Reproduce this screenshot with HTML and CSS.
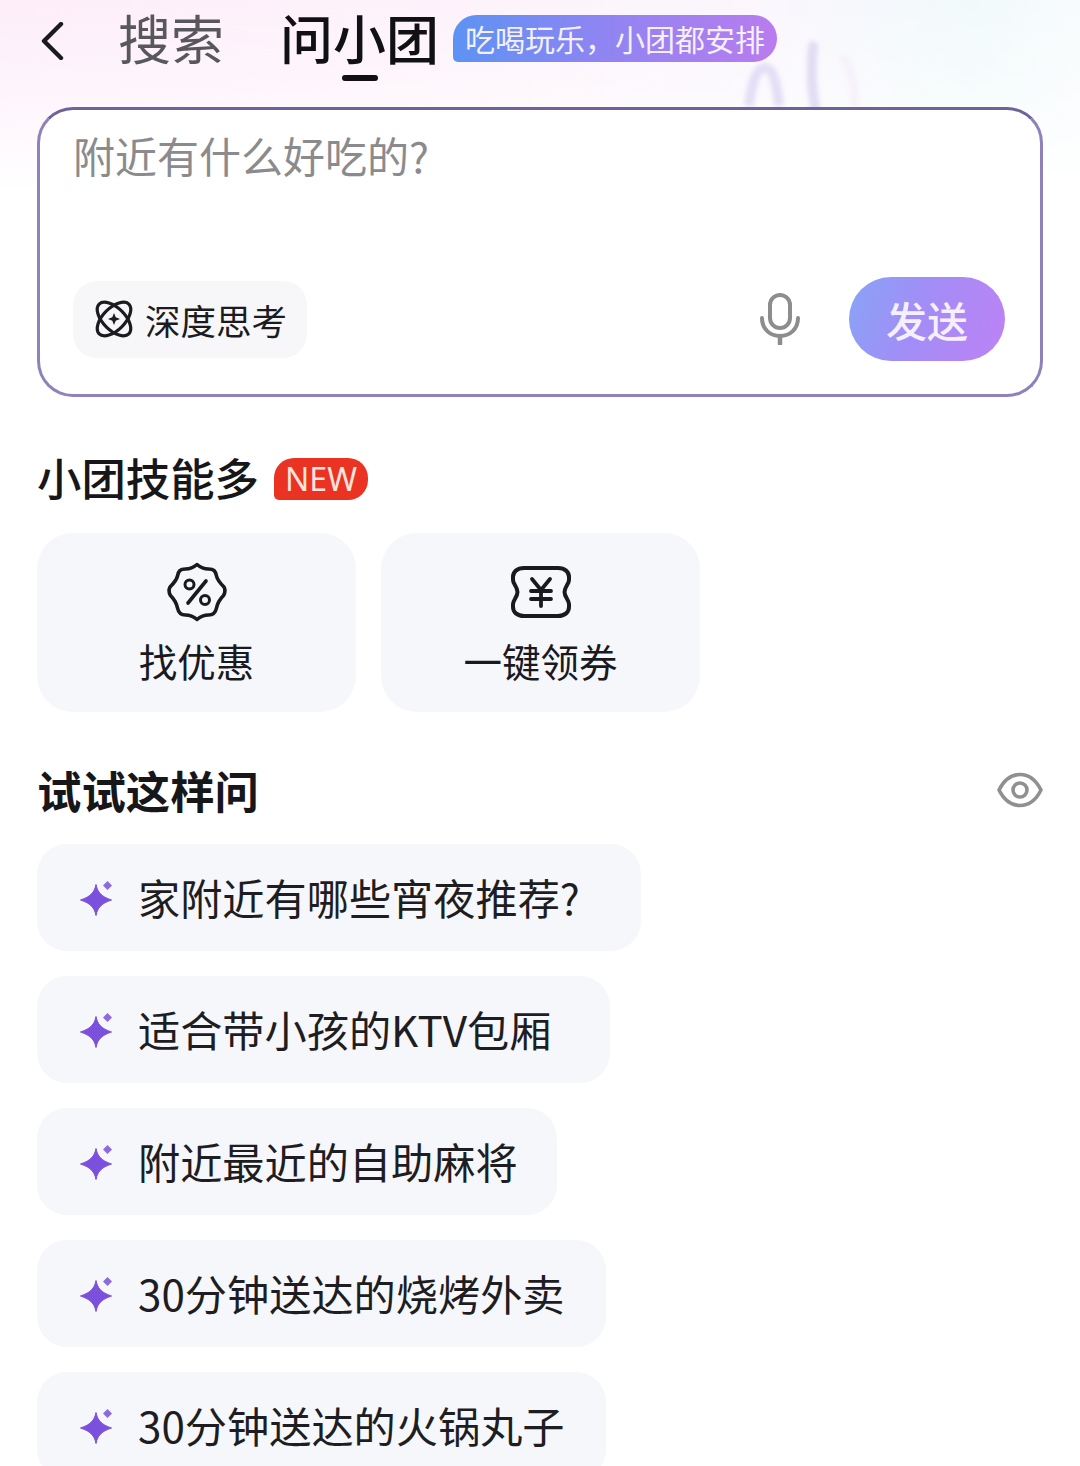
FILE: index.html
```html
<!DOCTYPE html>
<html lang="zh-CN">
<head>
<meta charset="utf-8">
<title>问小团</title>
<link rel="stylesheet" href="styles.css">
</head>
<body>
<div class="page">
  <div class="bg-glow"></div>
  <svg class="bg-mark" viewBox="0 0 140 70" width="140" height="70" aria-hidden="true">
    <path d="M14 66C17 40 22 28 30 28C38 28 42 44 44 66" fill="none" stroke="#e4dff5" stroke-width="10"/>
    <path d="M78 6C76 24 76 46 80 66" fill="none" stroke="#e2ddf3" stroke-width="10" stroke-linecap="round"/>
    <path d="M108 16C116 30 120 46 120 66" fill="none" stroke="#f6f1fa" stroke-width="8"/>
  </svg>
  <header class="top">
    <svg class="back" viewBox="0 0 24 38" width="24" height="38" aria-hidden="true">
      <path d="M21 2L4 19L21 36" fill="none" stroke="#1b1b1f" stroke-width="4.400" stroke-linecap="round" stroke-linejoin="round"/>
    </svg>
    <span class="tab">搜索</span>
    <span class="tab tab-active">问小团</span>
    <span class="slogan">吃喝玩乐，小团都安排</span>
  </header>

  <section class="ask">
    <div class="placeholder">附近有什么好吃的?</div>
    <div class="ask-foot">
      <div class="chip">
        <svg viewBox="0 0 38 38" width="38" height="38" aria-hidden="true">
          <g fill="none" stroke="#1c1c20" stroke-width="3.200">
            <ellipse cx="19" cy="19" rx="21" ry="11" transform="rotate(45 19 19)"/>
            <ellipse cx="19" cy="19" rx="21" ry="11" transform="rotate(-45 19 19)"/>
          </g>
          <path d="M19 13L20.700 17.300L25 19L20.700 20.700L19 25L17.300 20.700L13 19L17.300 17.300Z" fill="#1c1c20"/>
        </svg>
        <span>深度思考</span>
      </div>
      <div class="ask-actions">
        <svg class="mic" viewBox="0 0 40 52" width="40" height="52" aria-hidden="true">
          <rect x="10" y="2" width="20" height="33" rx="10" fill="none" stroke="#8d8d8f" stroke-width="4"/>
          <path d="M2 25C2 36 10 43 20 43C30 43 38 36 38 25" fill="none" stroke="#8d8d8f" stroke-width="4" stroke-linecap="round"/>
          <path d="M20 43V51" stroke="#8d8d8f" stroke-width="4.500" stroke-linecap="round"/>
        </svg>
        <div class="send">发送</div>
      </div>
    </div>
  </section>

  <div class="heading heading-skill">
    <h2>小团技能多</h2>
    <span class="new">NEW</span>
  </div>
  <div class="skills">
    <div class="skill">
      <svg viewBox="0 0 60 60" width="60" height="60" aria-hidden="true">
        <path d="M30 2.500C33.500 5.500 36 7 41.500 7C47 7 48.500 9 49.500 14C50.500 18.500 53 21 57 25C58.500 28 58 31 56.500 33.500C53 37 50.500 41 49.500 46C48.500 51 46 53 41.500 53C36 53 33.500 54.500 30 57.500C26.500 54.500 24 53 18.500 53C14 53 11.500 51 10.500 46C9.500 41 7 37 3.500 33.500C2 31 1.500 28 3 25C7 21 9.500 18.500 10.500 14C11.500 9 13 7 18.500 7C24 7 26.500 5.500 30 2.500Z" fill="none" stroke="#1a1a1e" stroke-width="3.600" stroke-linejoin="round"/>
        <circle cx="22.500" cy="22.500" r="4.500" fill="none" stroke="#1a1a1e" stroke-width="3"/>
        <circle cx="38" cy="38" r="4.500" fill="none" stroke="#1a1a1e" stroke-width="3"/>
        <path d="M39 19L21 41" stroke="#1a1a1e" stroke-width="3.600" stroke-linecap="round"/>
      </svg>
      <span>找优惠</span>
    </div>
    <div class="skill">
      <svg viewBox="0 0 60 60" width="60" height="60" aria-hidden="true">
        <path d="M13 6H47C54 6 58 10 58 15V18C58 22 53.500 25 53.500 30C53.500 35 58 38 58 42V45C58 50 54 54 47 54H13C6 54 2 50 2 45V42C2 38 6.500 35 6.500 30C6.500 25 2 22 2 18V15C2 10 6 6 13 6Z" fill="none" stroke="#1a1a1e" stroke-width="4"/>
        <path d="M21 17L30 28L39 17M20 29H40M20 37H40M30 28V44" fill="none" stroke="#1a1a1e" stroke-width="3.800" stroke-linecap="round" stroke-linejoin="round"/>
      </svg>
      <span>一键领券</span>
    </div>
  </div>

  <div class="heading heading-try">
    <h2 class="strong">试试这样问</h2>
    <svg class="eye" viewBox="0 0 46 36" width="46" height="36" aria-hidden="true">
      <path d="M2 18C7 8 14 2.500 23 2.500C32 2.500 39 8 44 18C39 28 32 33.500 23 33.500C14 33.500 7 28 2 18Z" fill="none" stroke="#909092" stroke-width="3.600" stroke-linejoin="round"/>
      <circle cx="23" cy="18" r="7" fill="none" stroke="#909092" stroke-width="3.600"/>
    </svg>
  </div>
  <ul class="prompts">
    <li class="prompt prompt-xl"><svg class="spark" viewBox="0 0 36 36" width="36" height="36" aria-hidden="true"><use href="#spark"/></svg><span>家附近有哪些宵夜推荐?</span></li>
    <li class="prompt prompt-lg"><svg class="spark" viewBox="0 0 36 36" width="36" height="36" aria-hidden="true"><use href="#spark"/></svg><span>适合带小孩的KTV包厢</span></li>
    <li class="prompt prompt-sm"><svg class="spark" viewBox="0 0 36 36" width="36" height="36" aria-hidden="true"><use href="#spark"/></svg><span>附近最近的自助麻将</span></li>
    <li class="prompt prompt-md"><svg class="spark" viewBox="0 0 36 36" width="36" height="36" aria-hidden="true"><use href="#spark"/></svg><span>30分钟送达的烧烤外卖</span></li>
    <li class="prompt prompt-md"><svg class="spark" viewBox="0 0 36 36" width="36" height="36" aria-hidden="true"><use href="#spark"/></svg><span>30分钟送达的火锅丸子</span></li>
  </ul>
  <svg class="defs" width="0" height="0" aria-hidden="true">
    <defs>
      <g id="spark">
        <path d="M17 4.500C18.500 12 22 16.500 32.500 20C22 23.500 18.500 28 17 35.500C15.500 28 12 23.500 1.500 20C12 16.500 15.500 12 17 4.500Z" fill="#7a50dc" stroke="#7a50dc" stroke-width="1" stroke-linejoin="round"/>
        <path d="M28.500 1L33 5.500L28.500 10L24 5.500Z" fill="#8c6ae0"/>
      </g>
    </defs>
  </svg>
</div>
</body>
</html>
```
FILE: styles.css
```css
* { box-sizing: border-box; }
html, body { margin: 0; padding: 0; height: 1466px; overflow: hidden; background: #fff; }
body { font-family: "Noto Sans CJK SC", "Noto Sans", sans-serif; color: #1b1b1f; }
.page { position: relative; width: 1080px; height: 1466px; overflow: hidden; padding: 0 37px; background: #fff; }
.bg-glow {
  position: absolute; left: 0; top: 0; width: 1080px; height: 190px;
  background:
    linear-gradient(to bottom, rgba(255,255,255,0) 0, rgba(255,255,255,0.35) 45%, #fff 100%),
    linear-gradient(90deg, #fdeefa 0, #fdf3fb 45%, #faf7fd 72%, #f1fafb 90%, #f8fbfd 100%);
}
.bg-mark { position: absolute; left: 735px; top: 40px; filter: blur(2px); }
.defs { position: absolute; }

.top { position: relative; display: flex; align-items: center; height: 81px; margin-bottom: 26px; }
.back { margin: 0 0 0 3px; flex: none; }
.tab { font-size: 53px; line-height: 75px; padding-bottom: 6px; color: #58585c; margin-left: 54px; white-space: nowrap; }
.tab-active { position: relative; font-weight: 500; color: #111114; margin-left: 56px; }
.tab-active::after {
  content: ""; position: absolute; left: 62px; bottom: 0; width: 36px; height: 6px;
  border-radius: 3px; background: #111114;
}
.slogan {
  align-self: flex-start; margin: 15px 0 0 14px; width: 324px; height: 47px;
  display: flex; align-items: center; justify-content: center;
  border-radius: 24px 24px 24px 5px; font-size: 30px; line-height: 47px; color: #f4f0ff; white-space: nowrap;
  background: linear-gradient(90deg, #5c93f3 0, #8e85f2 45%, #b97cee 100%);
}

.ask {
  position: relative; height: 290px; padding: 18px 35px 33px 33px; background: #fff;
  border: 3px solid #8f82bb; border-top-color: #6d6299; border-radius: 36px;
  display: flex; flex-direction: column; justify-content: space-between;
}
.placeholder { font-size: 42px; line-height: 54px; color: #8b8b8e; }
.ask-foot { display: flex; align-items: center; justify-content: space-between; }
.chip {
  display: flex; align-items: center; gap: 12px; width: 234px; height: 77px; padding-left: 22px;
  border-radius: 24px; background: #f7f7fa; font-size: 35.500px; color: #1c1c20; white-space: nowrap;
}
.chip svg { flex: none; overflow: visible; }
.ask-actions { display: flex; align-items: center; gap: 49px; }
.mic { flex: none; }
.send {
  width: 156px; height: 84px; border-radius: 42px; display: flex; align-items: center; justify-content: center;
  font-size: 41px; font-weight: 500; color: #f6efff;
  background: linear-gradient(110deg, #88a4f6 0, #a28df6 45%, #be82f5 100%);
}

.heading { display: flex; align-items: center; }
.heading h2 { margin: 0; font-size: 44.400px; line-height: 54px; padding-bottom: 6px; font-weight: 500; color: #17171a; white-space: nowrap; }
.heading .strong { font-weight: 700; }
.heading-skill { margin: 53px 0 23px; gap: 15px; }
.new {
  width: 94px; height: 42px; margin-top: -2px; display: flex; align-items: center; justify-content: center;
  border-radius: 20px 20px 20px 5px; background: #ea3323; color: #fde4de;
  font-family: "Noto Sans", sans-serif; font-size: 32px; line-height: 42px;
}
.skills { display: flex; gap: 25px; }
.skill {
  width: 319px; height: 179px; border-radius: 36px; background: #f6f7fb;
  display: flex; flex-direction: column; align-items: center; padding-top: 29px; gap: 11px;
  font-size: 38.500px; line-height: 54px; color: #1a1a1e; white-space: nowrap;
}
.skill svg { flex: none; }

.heading-try { margin: 51px 0 21px; justify-content: space-between; }
.eye { margin-top: -6px; }

.prompts { list-style: none; margin: 0; padding: 0; display: flex; flex-direction: column; align-items: flex-start; gap: 25px; }
.prompt {
  height: 107px; padding: 0 0 0 42px; border-radius: 30px; background: #f6f7fb;
  display: flex; align-items: center; gap: 23px; font-size: 42.200px; color: #1e1e22; white-space: nowrap;
}
.prompt span { line-height: 56px; padding-bottom: 2px; }
.prompt-xl { width: 604px; }
.prompt-lg { width: 573px; }
.prompt-md { width: 569px; }
.prompt-sm { width: 520px; }
.spark { flex: none; overflow: visible; }
```
